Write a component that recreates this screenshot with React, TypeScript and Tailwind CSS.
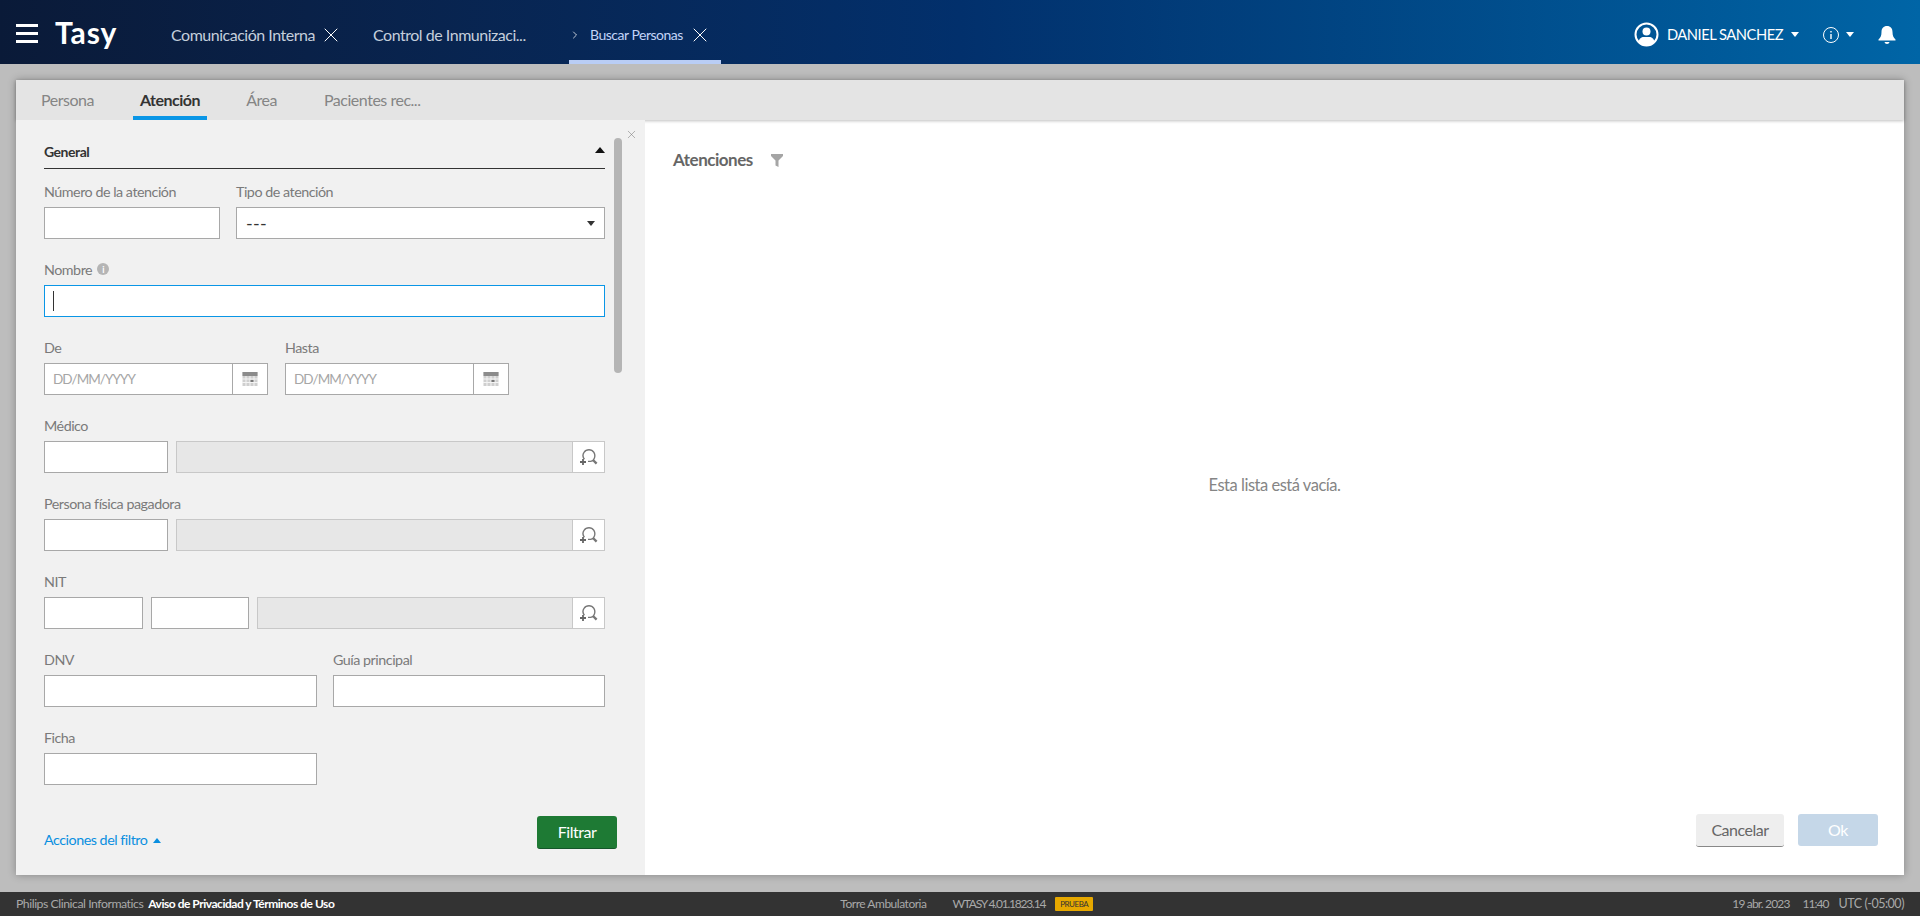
import { ReactNode } from "react";
import { ChevronRight, X } from "lucide-react";

const CalendarIcon = () => (
  <svg width="16" height="16" viewBox="0 0 16 16">
    <rect x="0.5" y="1" width="15" height="14" fill="#cfcfcf" />
    <rect x="0.5" y="1" width="15" height="4" fill="#8c8c8c" />
    <path d="M0 8h16M0 11.500h16M4 5v10M8 5v10M12 5v10" stroke="#f4f4f4" strokeWidth="1" />
    <rect x="8.500" y="9" width="3" height="2" fill="#777" />
  </svg>
);

const SearchIcon = () => (
  <svg width="20" height="20" viewBox="0 0 20 20" fill="none">
    <path d="M5.400 12.200C3.600 10 3.600 7.400 5.200 5.200 6 3.900 7.800 2.700 10 2.700c2.400 0 4 1.300 4.900 2.700 1.400 2.500 1.100 5.500-.6 7.600-.6.7-1.400 1.200-2.700 1.400H9" stroke="#777" strokeWidth="1.400" />
    <path d="M14 13l3.600 3.600" stroke="#777" strokeWidth="2.400" />
    <path d="M1 15h6M4 12v6" stroke="#666" strokeWidth="1.800" />
  </svg>
);

const Caret = ({ up, className }: { up?: boolean; className: string }) => (
  <svg width="10" height="6" viewBox="0 0 10 6" className={className}>
    <path d={up ? "M0 6L5 0l5 6z" : "M0 0h10L5 6z"} fill="currentColor" />
  </svg>
);

const Field = ({ label, children }: { label: ReactNode; children: ReactNode }) => (
  <div>
    <div className="flex h-[22px] items-start gap-[5px] text-[14.300px] leading-[14px] text-[#7a7a7a]">{label}</div>
    <div className="flex h-8 gap-2">{children}</div>
  </div>
);

const Input = ({ className }: { className: string }) => (
  <div className={`h-8 border border-[#a8a8a8] bg-white ${className}`} />
);

const DateInput = () => (
  <div className="flex h-8 w-[224px] border border-[#a8a8a8] bg-white">
    <div className="flex-1 pl-2 text-[13.500px] leading-[30px] tracking-[-0.07em] text-[#a6a6a6]">DD/MM/YYYY</div>
    <div className="flex w-[35px] items-center justify-center border-l border-[#a8a8a8]">
      <CalendarIcon />
    </div>
  </div>
);

const Lookup = ({ className }: { className: string }) => (
  <div className={`flex h-8 border border-[#c8c8c8] ${className}`}>
    <div className="flex-1 bg-[#e7e7e7]" />
    <div className="flex w-8 items-center justify-center border-l border-[#c8c8c8] bg-white">
      <SearchIcon />
    </div>
  </div>
);

const App = () => {
  return (
    <div className="flex h-[916px] flex-col overflow-hidden bg-[#bdbdbd] font-[Lato,sans-serif] tracking-[-0.03em]">
      {/* Header */}
      <header className="flex h-16 shrink-0 items-center bg-gradient-to-r from-[#0a1a38] via-[#02306c] to-[#0065a6] text-white">
        <div className="ml-4 mt-[2px] flex w-[22px] flex-col gap-[5px]">
          <span className="h-[3px] bg-white" />
          <span className="h-[3px] bg-white" />
          <span className="h-[3px] bg-white" />
        </div>
        <div className="ml-[17px] w-[116px] text-[30px] font-bold leading-none tracking-[0.03em]">Tasy</div>
        <div className="mt-[5px] flex w-[202px] items-center gap-[4px] text-[16px] text-[#c5cfdc]">
          Comunicación Interna <X size={24} strokeWidth={1} className="text-white" />
        </div>
        <div className="mt-[5px] w-[196px] text-[16px] text-[#c5cfdc]">Control de Inmunizaci...</div>
        <div className="relative flex h-16 w-[152px] items-center pt-[5px] text-[14px] text-[#c2d4f8]">
          <span className="w-[21px] text-white">
            <ChevronRight size={12} strokeWidth={1.500} />
          </span>
          Buscar Personas
          <X size={24} strokeWidth={1} className="ml-[5px] text-white" />
          <span className="absolute inset-x-0 bottom-0 h-1 bg-[#b9cdf5]" />
        </div>
        <div className="ml-auto mr-[24px] mt-[5px] flex items-center">
          <svg width="25" height="25" viewBox="0 0 25 25">
            <circle cx="12.5" cy="12.5" r="11" fill="none" stroke="#fff" strokeWidth="2" />
            <circle cx="12.5" cy="9.5" r="4" fill="#fff" />
            <path d="M4.5 20c.6-3.6 3-5 5-5h6c2 0 4.400 1.400 5 5a11 11 0 0 1-16 0z" fill="#fff" />
          </svg>
          <span className="ml-[8px] text-[14.700px] text-white">DANIEL SANCHEZ</span>
          <Caret className="ml-2 h-[5px] w-2 text-white" />
          <svg width="18" height="18" viewBox="0 0 18 18" className="ml-[23px]" fill="none">
            <circle cx="9" cy="9" r="7.5" stroke="#fff" />
            <path d="M9 8v5M9 5v1.500" stroke="#fff" strokeWidth="1.400" />
          </svg>
          <Caret className="ml-[6px] h-[5px] w-2 text-white" />
          <svg width="18" height="20" viewBox="0 0 18 20" className="ml-[24px]">
            <path d="M9 1c3.500 0 5.500 2.500 5.500 6 0 4 1 5.500 3 7.500v1H.5v-1c2-2 3-3.500 3-7.500C3.500 3.500 5.500 1 9 1z" fill="#fff" />
            <path d="M6.500 17h5c-.3 1.300-1.200 2-2.500 2s-2.200-.7-2.500-2z" fill="#fff" />
          </svg>
        </div>
      </header>

      {/* Main card */}
      <main className="flex min-h-0 flex-1 flex-col pb-[17px] pl-4 pr-4 pt-4">
        <div className="flex min-h-0 flex-1 flex-col bg-white shadow-[0_0_8px_rgba(0,0,0,0.3)]">
          <nav className="flex h-10 shrink-0 items-end bg-[#e4e4e4] pl-[25px] text-[16px] text-[#858585] shadow-[0_1px_3px_rgba(0,0,0,0.25)]">
            <div className="flex h-10 w-[92px] items-center">Persona</div>
            <div className="flex h-10 w-[74px] items-center justify-center border-b-4 border-[#0a96e6] pt-[3px] font-bold text-[#333]">Atención</div>
            <div className="flex h-10 w-[79px] items-center justify-end pr-[9px]">Área</div>
            <div className="flex h-10 items-center pl-[38px]">Pacientes rec...</div>
          </nav>
          <div className="flex min-h-0 flex-1">
            {/* Filter panel */}
            <aside className="relative flex w-[629px] shrink-0 flex-col bg-[#f1f1f1] pl-7 pr-[40px]">
              <X size={13} strokeWidth={1} className="absolute right-[7px] top-[8px] text-[#777]" />
              <div className="absolute right-[23px] top-[18px] h-[235px] w-2 rounded-full bg-[#b5b5b5]" />
              <div className="mt-[21px] flex h-[28px] items-start justify-between border-b border-[#333] text-[14px] font-bold text-[#333]">
                General
                <Caret up className="mt-[6px] text-[#111]" />
              </div>
              <div className="mt-[16px] flex flex-col gap-6">
                <div className="flex gap-[16px]">
                  <div className="w-[176px]">
                    <Field label="Número de la atención"><Input className="w-full" /></Field>
                  </div>
                  <div className="flex-1">
                    <Field label="Tipo de atención">
                      <div className="flex h-8 w-full items-center justify-between border border-[#a8a8a8] bg-white pl-[9px] pr-[9px] text-[18px] tracking-[0.02em] text-[#333]">
                        ---
                        <Caret className="h-[5px] w-2 text-[#333]" />
                      </div>
                    </Field>
                  </div>
                </div>
                <Field
                  label={
                    <>
                      Nombre
                      <span className="flex h-3 w-3 items-center justify-center rounded-full bg-[#b5b5b5] text-[9px] font-bold leading-none text-white">i</span>
                    </>
                  }
                >
                  <div className="flex h-8 w-full items-center border border-[#0a96e6] bg-white pl-2">
                    <span className="h-[20px] w-px bg-[#333]" />
                  </div>
                </Field>
                <div className="flex gap-[17px]">
                  <Field label="De"><DateInput /></Field>
                  <Field label="Hasta"><DateInput /></Field>
                </div>
                <Field label="Médico">
                  <Input className="w-[124px]" />
                  <Lookup className="flex-1" />
                </Field>
                <Field label="Persona física pagadora">
                  <Input className="w-[124px]" />
                  <Lookup className="flex-1" />
                </Field>
                <Field label="NIT">
                  <Input className="w-[99px]" />
                  <Input className="w-[98px]" />
                  <Lookup className="flex-1" />
                </Field>
                <div className="flex gap-4">
                  <div className="w-[273px]">
                    <Field label="DNV"><Input className="w-full" /></Field>
                  </div>
                  <div className="flex-1">
                    <Field label="Guía principal"><Input className="w-full" /></Field>
                  </div>
                </div>
                <div className="w-[273px]">
                  <Field label="Ficha"><Input className="w-full" /></Field>
                </div>
              </div>
              <div className="mr-[-12px] mt-[31px] flex items-start justify-between">
                <div className="mt-[15px] flex items-center gap-[6px] text-[14.300px] leading-[18px] text-[#0a8fe0]">
                  Acciones del filtro
                  <Caret up className="h-[5px] w-2 text-[#0a8fe0]" />
                </div>
                <button className="h-[33px] w-20 rounded-[3px] border-b border-[#14562a] bg-[#1e7a34] text-[16px] text-white">Filtrar</button>
              </div>
            </aside>

            {/* Results */}
            <section className="flex min-w-0 flex-1 flex-col px-[26px] pt-[30px]">
              <div className="flex items-center gap-[18px] pl-[2px] text-[17px] font-bold leading-5 text-[#666]">
                Atenciones
                <svg width="12" height="13" viewBox="0 0 12 13">
                  <path d="M0 0h12v2L7.500 6.500V13l-3-1.500v-5L0 2z" fill="#a5a5a5" />
                </svg>
              </div>
              <div className="flex flex-1 items-center justify-center pb-[14px] text-[16.500px] text-[#858585]">Esta lista está vacía.</div>
              <div className="mb-[28px] flex justify-end gap-[14px]">
                <button className="h-[33px] w-[88px] rounded-[3px] border-b border-[#888] bg-[#eeeeee] text-[16px] text-[#666]">Cancelar</button>
                <button className="h-8 w-20 rounded-[3px] bg-[#c5d7e8] text-[16px] text-white">Ok</button>
              </div>
            </section>
          </div>
        </div>
      </main>

      {/* Footer */}
      <footer className="flex h-6 shrink-0 items-center bg-[#333333] pl-4 pr-4 text-[12px] text-[#a9a9a9]">
        <span className="text-[12.300px]">Philips Clinical Informatics</span>
        <span className="ml-[5px] font-bold text-white">Aviso de Privacidad y Términos de Uso</span>
        <span className="ml-[506px]">Torre Ambulatoria</span>
        <span className="ml-[26px] tracking-[-0.1em]">WTASY 4.01.1823.14</span>
        <span className="ml-[10px] flex h-[14px] w-[38px] items-center justify-center rounded-[1px] bg-[#e6a800] text-[8px] text-[#333]">PRUEBA</span>
        <span className="ml-auto tracking-[-0.07em]">19 abr. 2023</span>
        <span className="ml-[13px] tracking-[-0.08em]">11:40</span>
        <span className="ml-[10px] text-[12.500px]">UTC (-05:00)</span>
      </footer>
    </div>
  );
};

export default App;
